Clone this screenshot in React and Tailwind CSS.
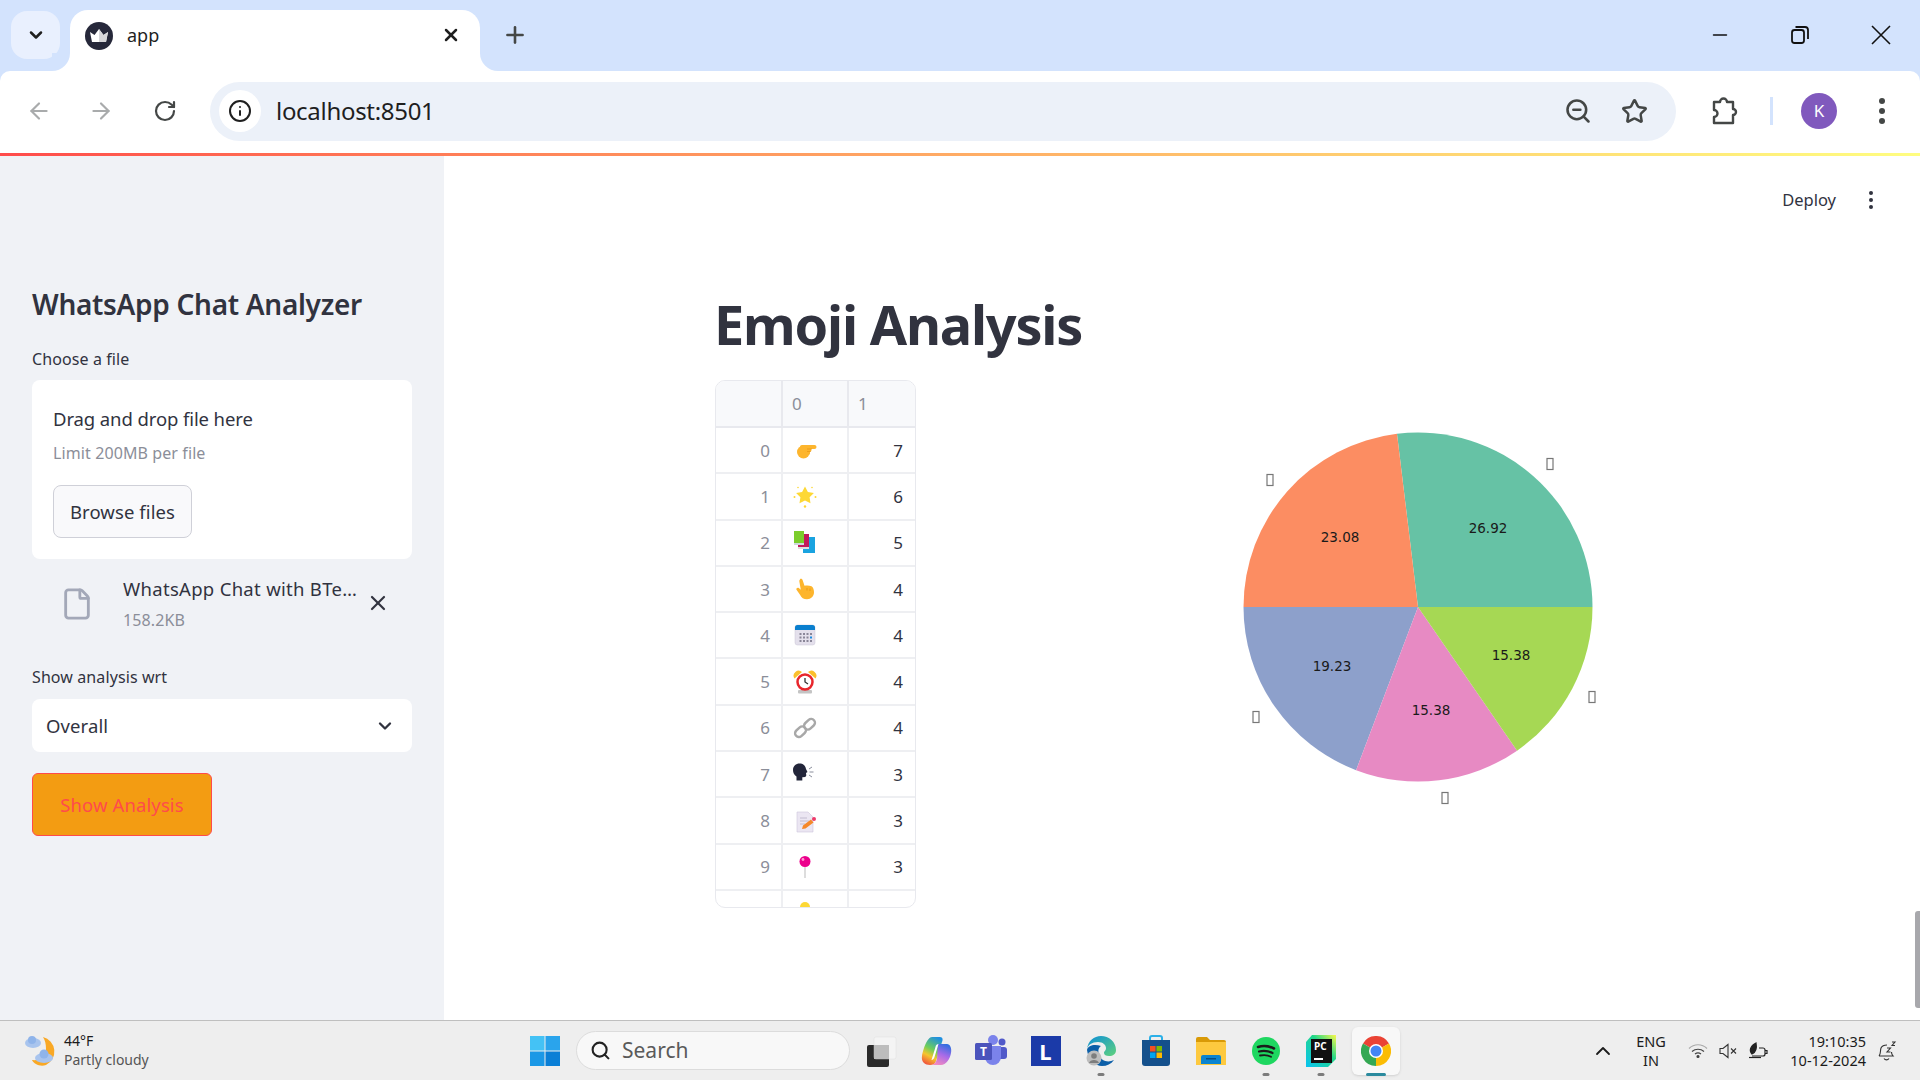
import { ArrowLeft, ArrowRight, ChevronDown, ChevronUp, File, Info, Minus, Plus, RotateCw, Search, Star, X, ZoomOut } from "lucide-react";

const sans = "font-['Noto_Sans',sans-serif]";

const slices = [
  { value: 26.92, color: "#66c2a5" },
  { value: 23.08, color: "#fc8d62" },
  { value: 19.23, color: "#8da0cb" },
  { value: 15.38, color: "#e78ac3" },
  { value: 15.38, color: "#a6d854" },
];

const pieTexts = [
  { x: 257, y: 108, label: "26.92" },
  { x: 109, y: 117, label: "23.08" },
  { x: 101, y: 246, label: "19.23" },
  { x: 200, y: 290, label: "15.38" },
  { x: 280, y: 235, label: "15.38" },
];

// missing glyph boxes, matplotlib could not draw the emoji labels
const tofu = [
  [319, 44],
  [39, 60],
  [25, 297],
  [214, 378],
  [361, 277],
];

const PieChart = () => {
  const cx = 187;
  const cy = 187;
  const r = 174.500;
  let angle = 0;
  const wedges = slices.map((s) => {
    const start = angle;
    angle += (s.value / 100) * Math.PI * 2;
    const x1 = cx + r * Math.cos(start);
    const y1 = cy - r * Math.sin(start);
    const x2 = cx + r * Math.cos(angle);
    const y2 = cy - r * Math.sin(angle);
    return { d: `M${cx} ${cy}L${x1} ${y1}A${r} ${r} 0 0 0 ${x2} ${y2}Z`, color: s.color };
  });
  return (
    <svg width="400" height="400" viewBox="0 0 400 400" className="ml-[314.500px] mt-[40px] shrink-0">
      {wedges.map((w, i) => (
        <path key={i} d={w.d} fill={w.color} />
      ))}
      {pieTexts.map((t, i) => (
        <text key={i} x={t.x} y={t.y} textAnchor="middle" dominantBaseline="central" fontSize="13.5" fill="#1a1a1a" fontFamily="DejaVu Sans">
          {t.label}
        </text>
      ))}
      {tofu.map(([x, y], i) => (
        <rect key={i} x={x - 3} y={y - 5.5} width="6" height="11" fill="none" stroke="#777" strokeWidth="1.2" />
      ))}
    </svg>
  );
};

const EmojiPointRight = () => (
  <svg width="24" height="24" viewBox="0 0 24 24">
    <circle cx="10.500" cy="14" r="6.500" fill="#fdb52d" />
    <rect x="7" y="7" width="16.500" height="4" rx="2" fill="#fdb52d" />
    <rect x="12" y="10.500" width="6.500" height="3" rx="1.500" fill="#fdb52d" />
    <rect x="12" y="13.500" width="5" height="3" rx="1.500" fill="#fdb52d" />
    <path d="M14 11h5M14 13.500h4" stroke="#e08f10" strokeWidth=".6" fill="none" />
  </svg>
);

const EmojiStar = () => (
  <svg width="24" height="24" viewBox="0 0 24 24" fill="#fdd835">
    <path d="M12 2.500l2.900 5.400 6 1-4.300 4.300.9 6-5.500-2.700-5.500 2.700.9-6L3.100 8.900l6-1z" />
    <circle cx="1.500" cy="13" r="1" /><circle cx="22.500" cy="13" r="1" /><circle cx="12" cy="22.500" r="1.200" />
    <circle cx="5" cy="3.500" r=".8" /><circle cx="19" cy="3.500" r=".8" />
  </svg>
);

const EmojiBooks = () => (
  <svg width="24" height="24" viewBox="0 0 24 24">
    <rect x="10" y="6" width="12" height="16" fill="#1aa3e0" />
    <rect x="5" y="3" width="11" height="15" fill="#c2185b" />
    <rect x="5" y="16" width="11" height="2" fill="#ddd" />
    <rect x="1" y="0" width="10" height="13" fill="#7ccd2c" />
    <rect x="1" y="12" width="10" height="2" fill="#cfd8dc" />
  </svg>
);

const EmojiPointUp = () => (
  <svg width="24" height="24" viewBox="0 0 24 24">
    <path d="M7 2c1-.6 2.200-.2 2.500.8l2 6c2-.6 5-.5 7 .5 1.800 1 2.500 3.500 2.500 6 0 4-3 7-7 7-3.500 0-5.500-1.500-7-4.500l-3.500-5c-.8-1.200 1-2.800 2.300-1.700l2 1.600-1.500-8.500c-.1-.8.200-1.400.7-1.700z" fill="#fdb52d" />
    <path d="M14 11v2.500M17 11.500v2.500" stroke="#e08f10" strokeWidth=".7" fill="none" />
  </svg>
);

const EmojiCalendar = () => (
  <svg width="24" height="24" viewBox="0 0 24 24">
    <rect x="2" y="2" width="20" height="20" rx="2.500" fill="#e4e0ec" stroke="#c8c4d4" strokeWidth=".5" />
    <path d="M2 7V4.500A2.500 2.500 0 0 1 4.500 2h15A2.500 2.500 0 0 1 22 4.500V7z" fill="#0a7fce" />
    {[6.500, 10, 13.500, 17].map((x) =>
      [10, 13.500, 17].map((y) => (
        <rect key={`${x}-${y}`} x={x} y={y} width="2" height="2" fill={x === 17 && y === 13.500 ? "#1a8be0" : "#8a8698"} />
      ))
    )}
  </svg>
);

const EmojiAlarm = () => (
  <svg width="24" height="24" viewBox="0 0 24 24">
    <path d="M1.500 8.500a5 5 0 0 1 7.500-6.500zM22.500 8.500a5 5 0 0 0-7.500-6.500z" fill="#fbc02d" />
    <rect x="5" y="20" width="14" height="3.500" rx="1" fill="#c4c4c4" />
    <circle cx="12" cy="12" r="7.500" fill="#fff" stroke="#e8262c" strokeWidth="2.500" />
    <path d="M12 8v4l3 2" stroke="#333" strokeWidth="1.300" fill="none" />
  </svg>
);

const EmojiLink = () => (
  <svg width="24" height="24" viewBox="0 0 24 24" fill="none" stroke="#a8a8a8" strokeWidth="2.400">
    <rect x="1.500" y="12" width="12" height="7.500" rx="3.700" transform="rotate(-42 7.500 15.700)" />
    <rect x="10.500" y="4.500" width="12" height="7.500" rx="3.700" transform="rotate(-42 16.500 8.200)" />
  </svg>
);

const EmojiSpeaking = () => (
  <svg width="24" height="24" viewBox="0 0 24 24">
    <path d="M0 8c0-4 3-6.500 6.500-6.500s6 2 6.500 5.500l1.500 3-1.500 1 .3 2.500-1 1.500-3 .3v3.200H3.500v-4C1.200 13 0 11 0 8z" fill="#23263a" />
    <path d="M16 7l3-2M16.500 10h4M16 13l3 2" stroke="#8a8e9c" strokeWidth="1" />
  </svg>
);

const EmojiMemo = () => (
  <svg width="24" height="24" viewBox="0 0 24 24">
    <path d="M4 3h11l5 5v15H4z" fill="#ebe6f2" stroke="#cfc8dc" strokeWidth=".6" />
    <path d="M7 9h7M7 12h9M7 15h5" stroke="#c2bcd0" strokeWidth="1" />
    <path d="M9 20l1-3.500 8-6 2.500 3-8 6z" fill="#f5882a" />
    <circle cx="21" cy="10" r="2" fill="#ee3a6a" />
  </svg>
);

const EmojiPin = () => (
  <svg width="24" height="24" viewBox="0 0 24 24">
    <rect x="11.300" y="10" width="1.400" height="13" fill="#cfcfcf" />
    <circle cx="12" cy="6.500" r="5.500" fill="#ec008c" />
    <circle cx="10" cy="4.500" r="1.400" fill="#ff9ad2" />
  </svg>
);

const rows = [
  { id: 0, icon: <EmojiPointRight />, count: 7 },
  { id: 1, icon: <EmojiStar />, count: 6 },
  { id: 2, icon: <EmojiBooks />, count: 5 },
  { id: 3, icon: <EmojiPointUp />, count: 4 },
  { id: 4, icon: <EmojiCalendar />, count: 4 },
  { id: 5, icon: <EmojiAlarm />, count: 4 },
  { id: 6, icon: <EmojiLink />, count: 4 },
  { id: 7, icon: <EmojiSpeaking />, count: 3 },
  { id: 8, icon: <EmojiMemo />, count: 3 },
  { id: 9, icon: <EmojiPin />, count: 3 },
];

const EmojiTable = () => (
  <div className="w-[201px] h-[528px] shrink-0 rounded-[10px] border border-[#e8e9ee] overflow-hidden text-[17px] leading-none">
    <div className="flex h-[47px] bg-[#f8f9fb] border-b-2 border-[#e8e9ee] text-[#8b8e99]">
      <div className="w-[67px] border-r-2 border-[#e8e9ee]" />
      <div className="w-[66px] border-r-2 border-[#e8e9ee] flex items-center pl-[9px]">0</div>
      <div className="flex-1 flex items-center pl-[9px]">1</div>
    </div>
    {rows.map((row) => (
      <div key={row.id} className="flex h-[46.300px] border-b-2 border-[#eeeff2]">
        <div className="w-[67px] border-r-2 border-[#eeeff2] flex items-center justify-end pr-[11px] text-[#8b8e99]">{row.id}</div>
        <div className="w-[66px] border-r-2 border-[#eeeff2] flex items-center pl-[10px]">{row.icon}</div>
        <div className="flex-1 flex items-center justify-end pr-[12px] text-[#31333f]">{row.count}</div>
      </div>
    ))}
    <div className="flex h-[20px]">
      <div className="w-[67px] border-r-2 border-[#eeeff2]" />
      <div className="w-[66px] border-r-2 border-[#eeeff2] pl-[17px] pt-[11px]">
        <div className="w-[10px] h-[10px] rounded-full bg-[#fdd835]" />
      </div>
    </div>
  </div>
);

const Sidebar = () => (
  <aside className="w-[444px] shrink-0 bg-[#f0f2f6] pl-[32px] pr-[32px] pt-[128px] text-[#31333f]">
    <h2 className="text-[28px] leading-[40px] font-semibold tracking-[-0.3px] whitespace-nowrap">WhatsApp Chat Analyzer</h2>
    <div className="mt-[25px] text-[16px] leading-[20px] tracking-[0.1px]">Choose a file</div>
    <div className="mt-[11px] h-[179px] bg-white rounded-[8px] pl-[21px] pt-[25px]">
      <div className="text-[18.500px] leading-[28px] tracking-[-0.1px]">Drag and drop file here</div>
      <div className="mt-[10px] text-[16px] leading-[20px] text-[#8b8e99] tracking-[0.1px]">Limit 200MB per file</div>
      <button className="mt-[22px] w-[139px] h-[53px] rounded-[8px] border border-[#cfd0d8] bg-[#f9f9fb] text-[18.500px] tracking-[0.1px]">Browse files</button>
    </div>
    <div className="flex items-center h-[66px] mt-[12px]">
      <File size={34} strokeWidth={2} className="ml-[28px] text-[#a3a8b8] shrink-0" />
      <div className="ml-[29px] w-[240px] -mt-[2px]">
        <div className="text-[18.500px] leading-[26px] tracking-[0.3px] whitespace-nowrap">WhatsApp Chat with BTe…</div>
        <div className="mt-[8px] text-[16px] leading-[20px] text-[#8b8e99] tracking-[0.1px]">158.2KB</div>
      </div>
      <X size={24} strokeWidth={2.2} className="ml-[3px] -mt-[2px] shrink-0" />
    </div>
    <div className="mt-[30px] text-[16px] leading-[20px] tracking-[0.1px]">Show analysis wrt</div>
    <div className="mt-[12px] h-[53px] bg-white rounded-[8px] flex items-center justify-between pl-[14px] pr-[17px]">
      <span className="text-[18.500px] tracking-[0.1px]">Overall</span>
      <ChevronDown size={20} strokeWidth={2.8} />
    </div>
    <button className="mt-[21px] w-[180px] h-[63px] rounded-[6px] border border-[#ff4b4b] bg-[#f39c12] text-[#ff4b4b] text-[18.500px] tracking-[0.1px]">Show Analysis</button>
  </aside>
);

const MainArea = () => (
  <main className="relative flex-1 bg-white pl-[271px]">
    <div className="absolute right-[47px] top-[33px] flex items-center text-[#31333f]">
      <span className="text-[16.500px] leading-[22px] mr-[33px]">Deploy</span>
      <div className="flex flex-col gap-[3px]">
        <span className="w-[4px] h-[4px] rounded-full bg-[#31333f]" />
        <span className="w-[4px] h-[4px] rounded-full bg-[#31333f]" />
        <span className="w-[4px] h-[4px] rounded-full bg-[#31333f]" />
      </div>
    </div>
    <h1 className="pt-[125px] -ml-[1px] text-[54px] leading-[86px] font-bold text-[#31333f] tracking-[-1.200px] whitespace-nowrap">Emoji Analysis</h1>
    <div className="flex mt-[13px] items-start">
      <EmojiTable />
      <PieChart />
    </div>
    <div className="absolute right-0 top-[755px] w-[5px] h-[97px] rounded-l-[3px] bg-[#a8a8ac]" />
  </main>
);

const Favicon = () => (
  <svg width="28" height="28" viewBox="0 0 28 28">
    <circle cx="14" cy="14" r="14" fill="#26283a" />
    <path d="M5 10l4.500 3L14 7l4.500 6L23 10l-2 10H7z" fill="#fff" />
    <path d="M14 7l4.500 6L23 10l-2 10h-7z" fill="#d7d7da" />
  </svg>
);

const TabStrip = () => (
  <div className="relative h-[71px] bg-[#d3e3fd] flex items-end">
    <div className="absolute left-[11px] top-[11px] w-[49px] h-[48px] rounded-[16px] bg-[#e9f0fe] flex items-center justify-center">
      <ChevronDown size={20} strokeWidth={3} className="text-[#1f1f1f]" />
    </div>
    <div className="relative ml-[70px] w-[410px] h-[61px] bg-white rounded-t-[18px] flex items-center pl-[15px] pb-[10px]">
      <Favicon />
      <span className="ml-[14px] text-[18px] text-[#1f1f1f] leading-none pb-[2px]">app</span>
      <X size={20} strokeWidth={3} className="absolute right-[19px] top-[15px] text-[#1f1f1f]" />
      <div className="absolute -right-[18px] bottom-0 w-[18px] h-[18px] bg-white">
        <div className="w-full h-full bg-[#d3e3fd] rounded-bl-[18px]" />
      </div>
      <div className="absolute -left-[18px] bottom-0 w-[18px] h-[18px] bg-white">
        <div className="w-full h-full bg-[#d3e3fd] rounded-br-[18px]" />
      </div>
    </div>
    <Plus size={26} strokeWidth={2.4} className="absolute left-[502px] top-[22px] text-[#444746]" />
    <Minus size={22} strokeWidth={1.800} className="absolute left-[1709px] top-[24px] text-[#111]" />
    <svg width="20" height="20" viewBox="0 0 20 20" fill="none" stroke="#111" strokeWidth="1.800" className="absolute left-[1790px] top-[25px]">
      <rect x="2" y="5" width="12" height="13" rx="2.500" />
      <path d="M5.500 2H15a3 3 0 0 1 3 3v9" />
    </svg>
    <svg width="20" height="20" viewBox="0 0 20 20" fill="none" stroke="#111" strokeWidth="1.600" className="absolute left-[1871px] top-[25px]">
      <path d="M1 1l18 18M19 1L1 19" />
    </svg>
  </div>
);

const Toolbar = () => (
  <div className="relative bg-[#d3e3fd]">
    <div className="h-[82px] bg-white rounded-t-[10px] flex items-center pl-[26px] pr-[26px] pb-[2px]">
      <ArrowLeft size={26} strokeWidth={2} className="text-[#a9abac]" />
      <ArrowRight size={26} strokeWidth={2} className="ml-[36px] text-[#a9abac]" />
      <RotateCw size={24} strokeWidth={2.2} className="ml-[39px] text-[#444746]" />
      <div className="ml-[33px] w-[1466px] h-[59px] rounded-full bg-[#ecf1f9] flex items-center pl-[9px]">
        <div className="w-[42px] h-[42px] rounded-full bg-white flex items-center justify-center">
          <Info size={24} strokeWidth={2} className="text-[#1f1f1f]" />
        </div>
        <span className="ml-[15px] text-[24px] leading-none tracking-[-0.3px] text-[#1f1f1f]">localhost:8501</span>
        <ZoomOut size={28} strokeWidth={2.2} className="ml-auto text-[#444746]" />
        <Star size={27} strokeWidth={2.2} className="ml-[29px] mr-[28px] text-[#444746]" />
      </div>
      <svg width="28" height="30" viewBox="0 0 28 30" fill="none" stroke="#444746" strokeWidth="2.400" className="ml-[35px] shrink-0">
        <path d="M3 6h6a3.500 3.500 0 0 1 7 0h6v7a3 3 0 0 1 0 6v8H3v-6a3.500 3.500 0 0 0 0-7z" strokeLinejoin="round" />
      </svg>
      <div className="ml-[31px] w-[3px] h-[28px] bg-[#d3e3fd] shrink-0" />
      <div className="ml-[28px] w-[36px] h-[36px] rounded-full bg-[#8059bd] text-white flex items-center justify-center text-[17px] shrink-0">K</div>
      <div className="ml-[42px] flex flex-col gap-[4px] shrink-0">
        <span className="w-[6px] h-[6px] rounded-full bg-[#444746]" />
        <span className="w-[6px] h-[6px] rounded-full bg-[#444746]" />
        <span className="w-[6px] h-[6px] rounded-full bg-[#444746]" />
      </div>
    </div>
  </div>
);

const Weather = () => (
  <svg width="36" height="36" viewBox="0 0 36 36">
    <path d="M21 4a15 15 0 0 1 3 28c-6 2-12-1-14-5 8 1 14-4 14-11 0-5-1-9-3-12z" fill="#f9a825" />
    <ellipse cx="11" cy="10" rx="8" ry="5" fill="#a8c4ee" />
    <circle cx="10" cy="7" r="4" fill="#8fb4ea" />
    <ellipse cx="22" cy="25" rx="9" ry="5" fill="#a8c4ee" />
    <circle cx="22" cy="21" r="4.500" fill="#8fb4ea" />
  </svg>
);

const TaskIcon = ({ children, dot, active }) => (
  <div className={`relative w-[48px] h-[48px] mx-[3.500px] rounded-[6px] flex items-center justify-center shrink-0 ${active ? "bg-[#f8f8f8] shadow-sm" : ""}`}>
    {children}
    {dot && <span className={`absolute bottom-[-1px] left-1/2 -translate-x-1/2 h-[3px] rounded-full ${active ? "w-[20px] bg-[#2b8a9e]" : "w-[7px] bg-[#7c7c7c]"}`} />}
  </div>
);

const TaskViewIcon = () => (
  <svg width="32" height="32" viewBox="0 0 32 32">
    <rect x="2" y="10" width="22" height="22" rx="2" fill="#2a2a2a" />
    <rect x="9" y="2" width="22" height="22" rx="2" fill="#f6f6f6" opacity=".85" stroke="#ddd" strokeWidth=".5" />
    <rect x="9" y="10" width="15" height="14" fill="#bdbdbd" />
  </svg>
);

const CopilotIcon = () => (
  <svg width="32" height="32" viewBox="0 0 32 32">
    <defs>
      <linearGradient id="copA" x1="0.7" y1="0" x2="0.3" y2="1">
        <stop offset="0" stopColor="#1f8fe0" />
        <stop offset=".45" stopColor="#6ecf5a" />
        <stop offset=".7" stopColor="#f6c52c" />
        <stop offset="1" stopColor="#f0563c" />
      </linearGradient>
      <linearGradient id="copB" x1="0.7" y1="0" x2="0.3" y2="1">
        <stop offset="0" stopColor="#2f6fe0" />
        <stop offset=".5" stopColor="#a86be8" />
        <stop offset="1" stopColor="#f28ac0" />
      </linearGradient>
    </defs>
    <path d="M12 2h8c3 0 3 3 2 5l-6 19c-1 3-3 4-6 4-5 0-9-3-8-9 1-6 5-19 10-19z" fill="url(#copA)" />
    <path d="M18 9h9c3 0 5 4 4 9-1 6-5 12-10 12h-9c3-1 4-3 5-6z" fill="url(#copB)" />
    <path d="M15.500 12c0-2 2-3 3-3l-4 13c-1 3-3 3-3 3z" fill="#fff" />
  </svg>
);

const TeamsIcon = () => (
  <svg width="32" height="32" viewBox="0 0 32 32">
    <circle cx="27" cy="7" r="3.500" fill="#5059c9" />
    <rect x="22" y="12" width="10" height="12" rx="3" fill="#5059c9" />
    <circle cx="18" cy="5" r="5" fill="#7b83eb" />
    <path d="M10 11h16v11a8 8 0 0 1-16 0z" fill="#7b83eb" />
    <rect x="0" y="8" width="17" height="17" rx="1.500" fill="#4b53bc" />
    <text x="8.500" y="21" textAnchor="middle" fontSize="12" fontWeight="700" fill="#fff" fontFamily="Noto Sans">T</text>
  </svg>
);

const LetterIcon = () => (
  <div className="w-[30px] h-[30px] bg-[#1b3aa8] text-white font-bold text-[22px] leading-none flex items-center justify-center">L</div>
);

const EdgeIcon = () => (
  <svg width="30" height="30" viewBox="0 0 30 30">
    <defs>
      <linearGradient id="edgeG" x1="0" y1="0" x2="1" y2="1">
        <stop offset="0" stopColor="#0c8ed9" />
        <stop offset="1" stopColor="#5fd27c" />
      </linearGradient>
    </defs>
    <path d="M1 13C2 5 8 0 15 0c8 0 15 6 15 14 0 4-3 6-7 6-3 0-5-1-5-3 0-2 2-2 2-5 0-3-3-6-8-6-6 0-10 3-11 7z" fill="url(#edgeG)" />
    <path d="M1 14c1 9 8 16 15 16 5 0 9-2 12-6-6 3-13 1-15-5-1-4-1-7 2-9C9 8 2 9 1 14z" fill="#0c5fa8" />
    <circle cx="8" cy="22" r="7.500" fill="#bdbdbd" />
    <circle cx="8" cy="20" r="2.800" fill="#7d7d7d" />
    <path d="M3 27c1-4 9-4 10 0z" fill="#7d7d7d" />
  </svg>
);

const StoreIcon = () => (
  <svg width="30" height="32" viewBox="0 0 30 32">
    <path d="M9 6V3a2 2 0 0 1 2-2h8a2 2 0 0 1 2 2v3" fill="none" stroke="#2bb0e8" strokeWidth="2" />
    <path d="M1 5h28v23a3 3 0 0 1-3 3H4a3 3 0 0 1-3-3z" fill="#14508c" />
    <rect x="9" y="11" width="5.500" height="5.500" fill="#f25022" />
    <rect x="15.500" y="11" width="5.500" height="5.500" fill="#7fba00" />
    <rect x="9" y="17.500" width="5.500" height="5.500" fill="#00a4ef" />
    <rect x="15.500" y="17.500" width="5.500" height="5.500" fill="#ffb900" />
  </svg>
);

const FilesIcon = () => (
  <svg width="30" height="28" viewBox="0 0 30 28">
    <path d="M0 2a2 2 0 0 1 2-2h9l3 3h14a2 2 0 0 1 2 2v4H0z" fill="#d99a07" />
    <path d="M0 5h30v23H0z" fill="#fdc93f" />
    <path d="M5 27v-7a2 2 0 0 1 2-2h16a2 2 0 0 1 2 2v7z" fill="#0a84d0" />
    <rect x="10" y="21" width="10" height="1.500" fill="#054f86" />
  </svg>
);

const SpotifyIcon = () => (
  <svg width="28" height="28" viewBox="0 0 28 28" fill="none" stroke="#1b1b1b" strokeLinecap="round">
    <circle cx="14" cy="14" r="14" fill="#1ed760" stroke="none" />
    <path d="M6 10c5-1.500 11-1 16 1.500" strokeWidth="2.600" />
    <path d="M7 14.500c4.500-1 9.500-.6 13.500 1.500" strokeWidth="2.200" />
    <path d="M8 18.500c4-.8 8-.5 11 1.200" strokeWidth="1.800" />
  </svg>
);

const PyCharmIcon = () => (
  <svg width="30" height="32" viewBox="0 0 30 32">
    <defs>
      <linearGradient id="pcG" x1="0" y1="1" x2="1" y2="0">
        <stop offset="0" stopColor="#08c2f2" />
        <stop offset=".6" stopColor="#21d789" />
        <stop offset="1" stopColor="#fcf84a" />
      </linearGradient>
    </defs>
    <path d="M6 0h24v24l-8 8H0V7z" fill="url(#pcG)" />
    <rect x="5" y="4" width="21" height="24" fill="#111" />
    <text x="8" y="15" fontSize="10" fontWeight="700" fill="#fff" fontFamily="Noto Sans">PC</text>
    <rect x="8" y="23" width="9" height="2" fill="#fff" />
  </svg>
);

const ChromeIcon = () => (
  <svg width="30" height="30" viewBox="0 0 30 30">
    <path d="M15 15L2 7.500A15 15 0 0 1 28 7.500z" fill="#ea4335" />
    <path d="M15 15L28 7.500A15 15 0 0 1 15 30z" fill="#fbbc04" />
    <path d="M15 15L15 30A15 15 0 0 1 2 7.500z" fill="#34a853" />
    <circle cx="15" cy="15" r="7" fill="#fff" />
    <circle cx="15" cy="15" r="5.500" fill="#4285f4" />
  </svg>
);

const Taskbar = () => (
  <footer className="relative h-[60px] shrink-0 bg-[#eeeeee] border-t border-[#bfbfbf] flex items-center text-[#1b1b1b]">
    <div className="ml-[22px] w-[36px] flex items-center"><Weather /></div>
    <div className="ml-[6px] w-[120px] leading-[19px] -mt-[2px]">
      <div className="text-[14px]">44°F</div>
      <div className="text-[14px] text-[#555]">Partly cloudy</div>
    </div>
    <svg width="30" height="30" viewBox="0 0 30 30" className="ml-[346px] shrink-0">
      <rect x="0" y="0" width="14.500" height="14.500" fill="#44c2f5" />
      <rect x="15.500" y="0" width="14.500" height="14.500" fill="#2aa4ec" />
      <rect x="0" y="15.500" width="14.500" height="14.500" fill="#1b98e6" />
      <rect x="15.500" y="15.500" width="14.500" height="14.500" fill="#0a7fd6" />
    </svg>
    <div className="ml-[16px] w-[274px] h-[39px] rounded-full bg-[#f8f8f8] border border-[#dcdcdc] flex items-center pl-[13px] shrink-0">
      <Search size={21} strokeWidth={2.4} className="text-[#222]" />
      <span className="ml-[11px] text-[21px] text-[#5a5a5a] leading-none">Search</span>
    </div>
    <div className="ml-[3px] flex items-center">
      <TaskIcon><TaskViewIcon /></TaskIcon>
      <TaskIcon><CopilotIcon /></TaskIcon>
      <TaskIcon><TeamsIcon /></TaskIcon>
      <TaskIcon><LetterIcon /></TaskIcon>
      <TaskIcon dot><EdgeIcon /></TaskIcon>
      <TaskIcon><StoreIcon /></TaskIcon>
      <TaskIcon><FilesIcon /></TaskIcon>
      <TaskIcon dot><SpotifyIcon /></TaskIcon>
      <TaskIcon dot><PyCharmIcon /></TaskIcon>
      <TaskIcon dot active><ChromeIcon /></TaskIcon>
    </div>
    <ChevronUp size={24} strokeWidth={1.800} className="ml-[188px] shrink-0" />
    <div className="ml-[14px] w-[44px] text-center text-[14.500px] leading-[19px]">
      <div>ENG</div>
      <div>IN</div>
    </div>
    <svg width="20" height="16" viewBox="0 0 20 16" fill="none" stroke="#444" strokeWidth="1.200" className="ml-[15px] shrink-0">
      <path d="M1 5.500c5-5 13-5 18 0" stroke="#aaa" />
      <path d="M4 8.500c3.500-3 8.500-3 12 0" />
      <path d="M7 11c2-1.500 4-1.500 6 0" />
      <circle cx="10" cy="13.500" r="1" fill="#222" />
    </svg>
    <svg width="20" height="16" viewBox="0 0 20 16" fill="none" stroke="#333" strokeWidth="1.100" className="ml-[11px] shrink-0">
      <path d="M1 5.500h3L9 1.500v13L4 10.500H1z" />
      <path d="M12 5.500l5 5M17 5.500l-5 5" />
    </svg>
    <svg width="22" height="18" viewBox="0 0 22 18" fill="none" stroke="#222" strokeWidth="1.200" className="ml-[8px] shrink-0">
      <path d="M5 14h11a2 2 0 0 0 2-2V8a2 2 0 0 0-2-2h-4M18 8.500h2v3h-2" />
      <path d="M2 15.500h12" />
      <path d="M5 12C2 9 3 4 9 1c1 5 0 9-4 11z" fill="#222" />
    </svg>
    <div className="ml-[7px] w-[90px] text-right text-[14.500px] leading-[19px] shrink-0">
      <div>19:10:35</div>
      <div>10-12-2024</div>
    </div>
    <svg width="20" height="22" viewBox="0 0 20 22" fill="none" stroke="#333" strokeWidth="1.100" className="ml-[11px] shrink-0">
      <path d="M2 16c2-2 1-5 2-8 1-2 3-3 6-3M2 16h14c-1.500-1.500-1.500-3-1.500-4M7 18.500a3 3 0 0 0 5 0" />
      <path d="M10 8h3.500l-3.500 4h3.500M15 2h3l-3 3.500h3" />
    </svg>
  </footer>
);

export default function App() {
  return (
    <div className={`w-[1920px] h-[1080px] overflow-hidden flex flex-col ${sans}`}>
      <TabStrip />
      <Toolbar />
      <div className="h-[3px] shrink-0 bg-gradient-to-r from-[#ff4b4b] to-[#fffd80]" />
      <div className="flex flex-1 min-h-0">
        <Sidebar />
        <MainArea />
      </div>
      <Taskbar />
    </div>
  );
}
